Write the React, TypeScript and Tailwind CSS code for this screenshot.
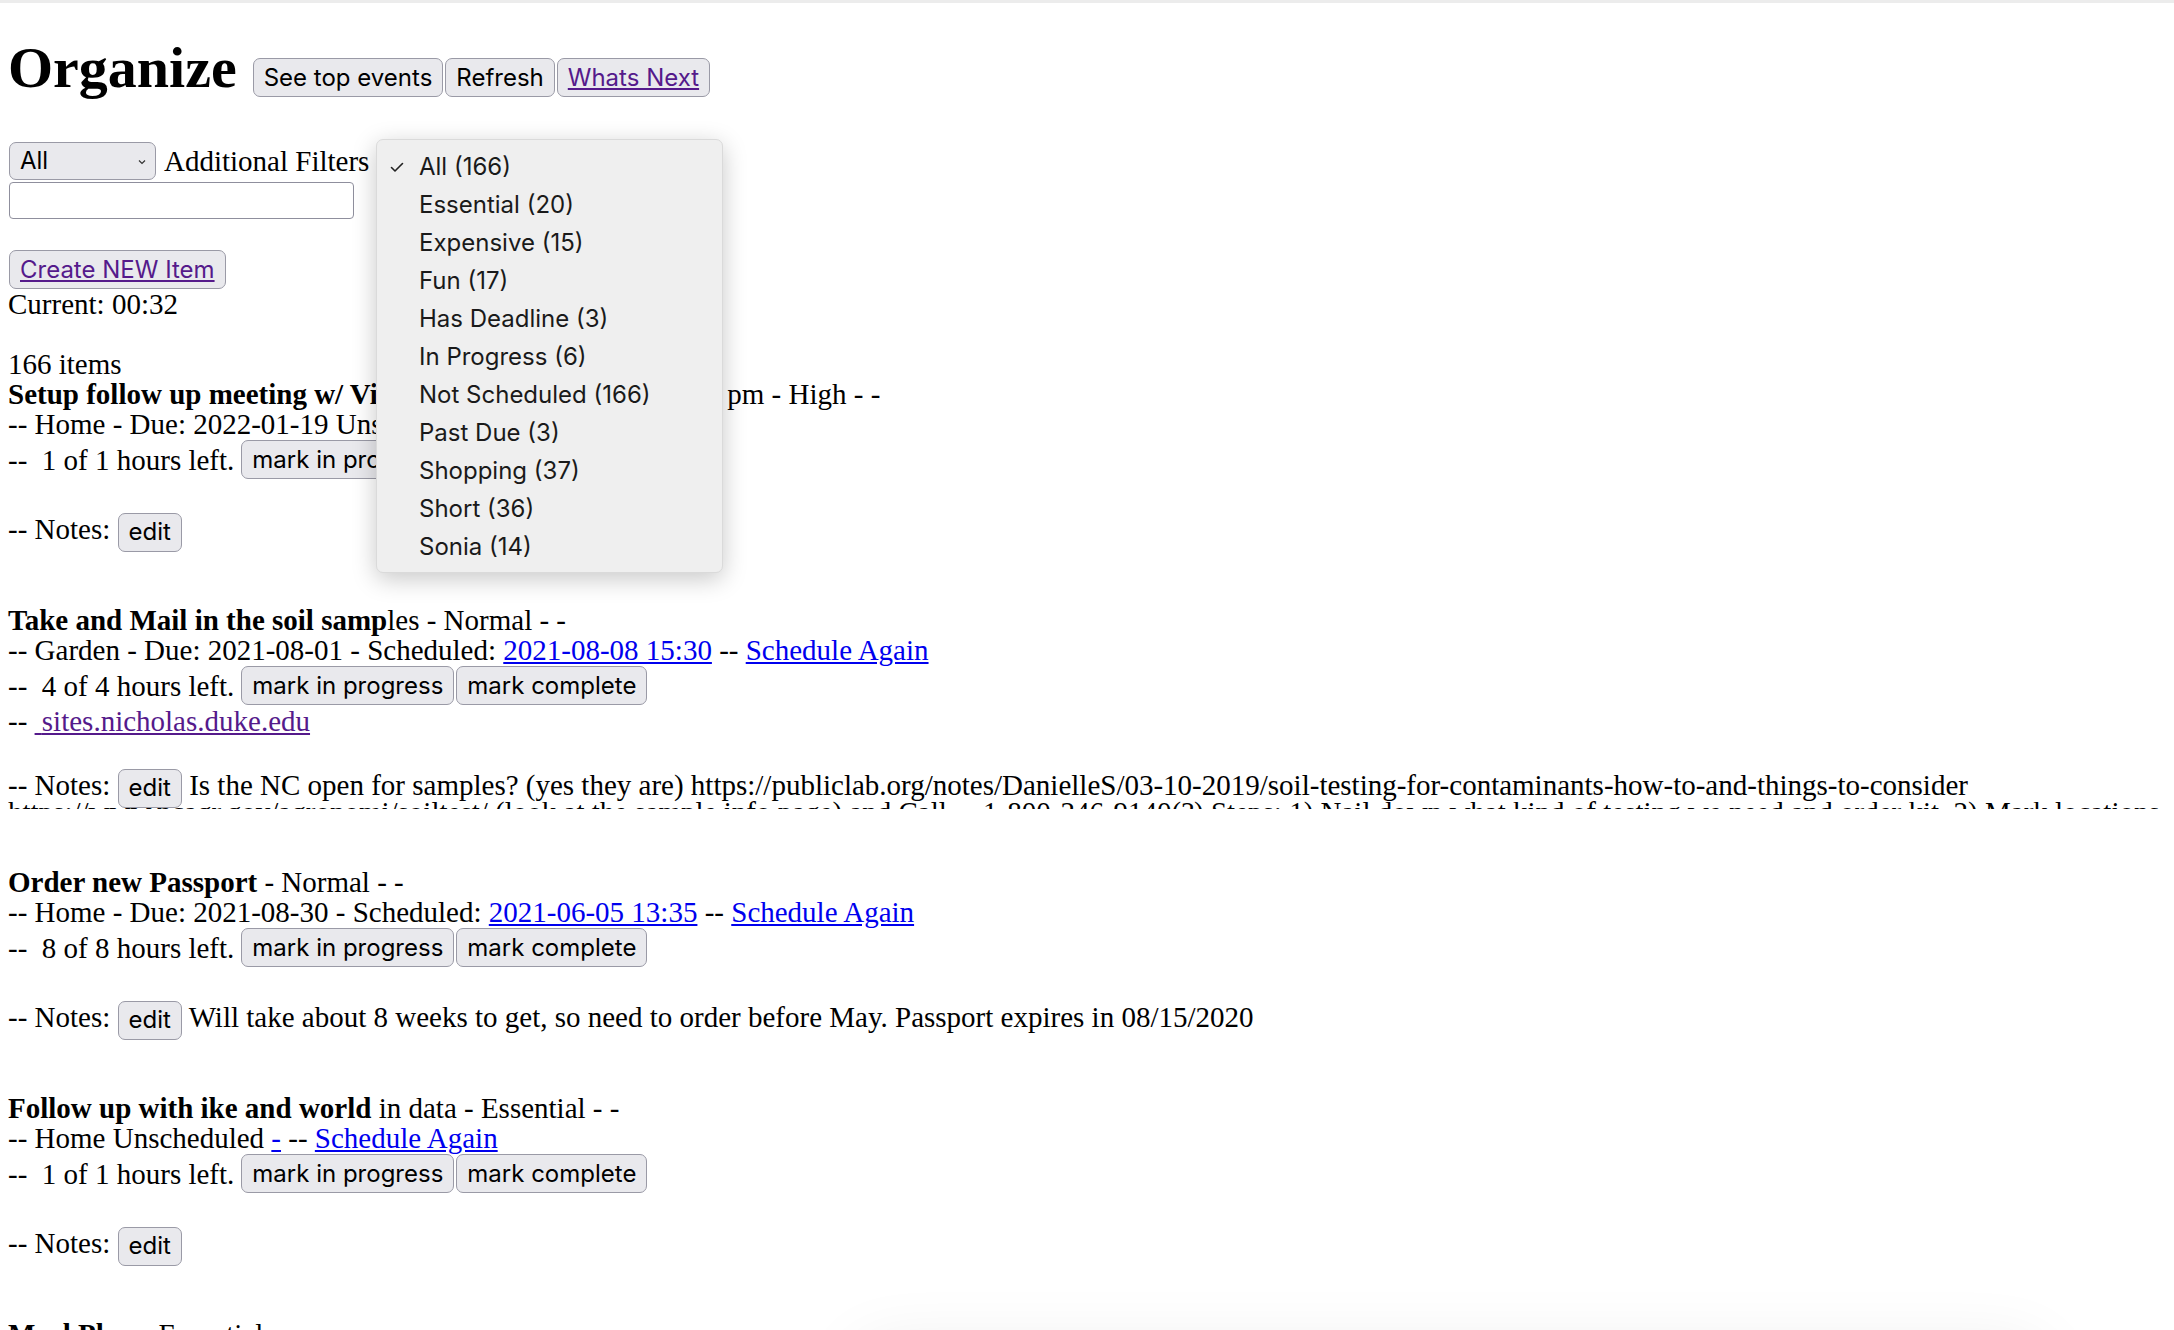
import React from 'react';

const ui = "font-['Inter','Liberation_Sans',sans-serif]";

const Btn: React.FC<{ children: React.ReactNode; className?: string }> = ({ children, className = '' }) => (
  <button
    className={`inline-flex items-center h-[39px] px-[10px] rounded-[7px] border border-[#9a9aa6] bg-[#e9e9ed] text-[24px] leading-none text-black ${ui} ${className}`}
  >
    {children}
  </button>
);

const Blue: React.FC<{ children: React.ReactNode }> = ({ children }) => (
  <a className="text-[#0000ee] underline cursor-pointer">{children}</a>
);

type ItemProps = {
  title: React.ReactNode;
  info: React.ReactNode;
  hours: string;
  link?: string;
  notes?: React.ReactNode;
  long?: boolean;
};

const Item: React.FC<ItemProps> = ({ title, info, hours, link, notes, long }) => (
  <div className={long ? 'mb-[58px]' : 'mb-[52px]'}>
    <div className="h-[30px] whitespace-nowrap">{title}</div>
    <div className="h-[30px] whitespace-nowrap">{info}</div>
    <div className="h-[41px] flex items-center whitespace-nowrap">
      <span>--&nbsp; {hours} hours left.</span>
      <Btn className="ml-[7px]">mark in progress</Btn>
      <Btn className="ml-[2px]">mark complete</Btn>
    </div>
    {link && (
      <div className="h-[30px] whitespace-nowrap">
        --&nbsp;<a className="text-[#551a8b] underline cursor-pointer">&nbsp;{link}</a>
      </div>
    )}
    {/* notes are clipped to one line plus a sliver */}
    <div className="mt-[29px] h-[44px] pt-[8px] overflow-hidden leading-[24px]">
      -- Notes: <Btn className="align-middle -my-[8px]">edit</Btn>
      {notes && <> {notes}</>}
    </div>
  </div>
);

const filters = [
  'All (166)',
  'Essential (20)',
  'Expensive (15)',
  'Fun (17)',
  'Has Deadline (3)',
  'In Progress (6)',
  'Not Scheduled (166)',
  'Past Due (3)',
  'Shopping (37)',
  'Short (36)',
  'Sonia (14)',
];

export default function App() {
  return (
    <div className="relative h-[1330px] w-full overflow-hidden bg-white text-black text-[29px] leading-[30px] font-['Liberation_Serif','Times_New_Roman',serif]">
      <div className="h-[3px] bg-[#ececec]" />

      <div className="px-[8px]">
        {/* header */}
        <div className="mt-[33px] h-[64px] flex items-start">
          <h1 className="text-[58px] leading-[64px] font-bold">Organize</h1>
          <div className="ml-[16px] mt-[22px] flex gap-[2px]">
            <Btn>See top events</Btn>
            <Btn>Refresh</Btn>
            <Btn>
              <a className="text-[#551a8b] underline">Whats Next</a>
            </Btn>
          </div>
        </div>

        {/* filters */}
        <div className="mt-[42px] h-[38px] flex items-center">
          <div className={`ml-[1px] w-[147px] h-[38px] rounded-[7px] border border-[#9a9aa6] bg-[#e9e9ed] flex items-center justify-between pl-[10px] pr-[9px] text-[24px] ${ui}`}>
            <span>All</span>
            <svg width="8" height="6" viewBox="0 0 8 6" className="mt-[2px]">
              <polyline points="1,1.5 4,4.5 7,1.5" fill="none" stroke="#333" strokeWidth="1.2" />
            </svg>
          </div>
          <span className="ml-[8px]">Additional Filters</span>
        </div>
        <div className="mt-[2px] ml-[1px] w-[345px] h-[37px] rounded-[4px] border border-[#8f8f9d] bg-white" />

        <Btn className="mt-[31px] ml-[1px]">
          <a className="text-[#551a8b] underline">Create NEW Item</a>
        </Btn>
        <div className="h-[30px]">Current: 00:32</div>
        <div className="mt-[30px] h-[30px]">166 items</div>

        <Item
          title={
            <>
              <b>Setup follow up meeting w/ Vic</b>ki about the project Friday 2 pm - High - -
            </>
          }
          info={
            <>
              -- Home - Due: 2022-01-19 Unscheduled <Blue>-</Blue>
            </>
          }
          hours="1 of 1"
        />

        <Item
          long
          title={
            <>
              <b>Take and Mail in the soil samp</b>les - Normal - -
            </>
          }
          info={
            <>
              -- Garden - Due: 2021-08-01 - Scheduled: <Blue>2021-08-08 15:30</Blue> -- <Blue>Schedule Again</Blue>
            </>
          }
          hours="4 of 4"
          link="sites.nicholas.duke.edu"
          notes={
            <>
              Is the NC open for samples? (yes they are){' '}
              <span className="whitespace-nowrap">
                https://publiclab.org/notes/DanielleS/03-10-2019/soil-testing-for-contaminants-how-to-and-things-to-consider
              </span>{' '}
              https://www.ncagr.gov/agronomi/soiltest/ (look at the sample info page) and Call ... 1-800-246-9140(?) Steps: 1) Nail down what kind of testing we need and order kit. 2) Mark locations
            </>
          }
        />

        <Item
          title={
            <>
              <b>Order new Passport</b> - Normal - -
            </>
          }
          info={
            <>
              -- Home - Due: 2021-08-30 - Scheduled: <Blue>2021-06-05 13:35</Blue> -- <Blue>Schedule Again</Blue>
            </>
          }
          hours="8 of 8"
          notes="Will take about 8 weeks to get, so need to order before May. Passport expires in 08/15/2020"
        />

        <Item
          title={
            <>
              <b>Follow up with ike and world </b>in data - Essential - -
            </>
          }
          info={
            <>
              -- Home Unscheduled <Blue>-</Blue> -- <Blue>Schedule Again</Blue>
            </>
          }
          hours="1 of 1"
        />

        <div className="h-[30px]">
          <b>Meal Plan</b> - Essential - -
        </div>
      </div>

      {/* open filter menu */}
      <div className={`absolute left-[376px] top-[139px] w-[347px] h-[434px] py-[8px] rounded-[7px] bg-[#efefef] border border-[#dadada] shadow-[0_6px_24px_rgba(0,0,0,0.22)] text-[24px] text-[#1a1a1a] ${ui}`}>
        {filters.map((f, i) => (
          <div key={f} className="relative h-[38px] flex items-center pl-[42px]">
            {i === 0 && (
              <svg width="14" height="11" viewBox="0 0 14 11" className="absolute left-[13px] top-[14px]">
                <polyline points="1.5,5.5 5,9 12.5,1.5" fill="none" stroke="#222" strokeWidth="1.6" strokeLinecap="round" strokeLinejoin="round" />
              </svg>
            )}
            {f}
          </div>
        ))}
      </div>

      {/* faint shadow of something below the viewport */}
      <div className="absolute left-[860px] top-[1350px] w-[1180px] h-[200px] rounded-[14px] bg-white shadow-[0_0_70px_rgba(0,0,0,0.09)]" />
    </div>
  );
}
